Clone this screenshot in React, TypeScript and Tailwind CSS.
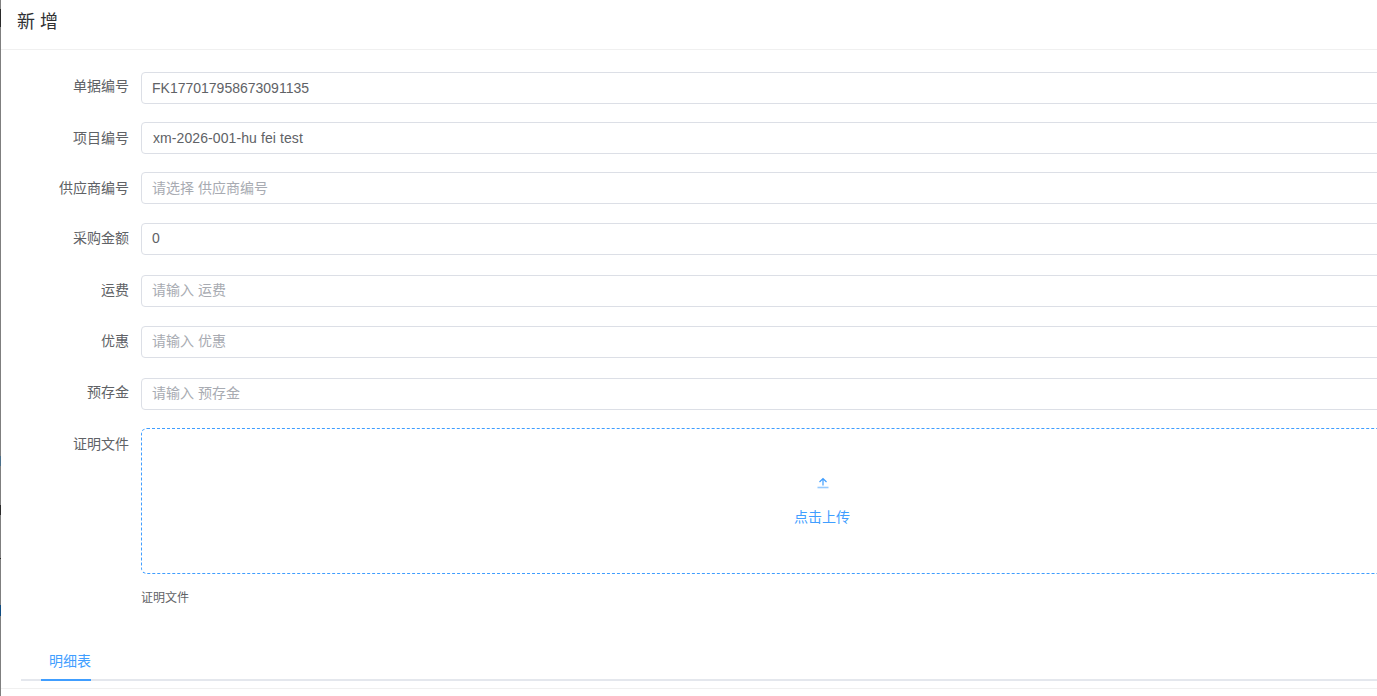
const font = "font-['Liberation_Sans','Noto_Sans_CJK_SC',sans-serif]";

function Field({ label, value, placeholder, className, labelLeading, boxPad, valueClass }: { label: string; value?: string; placeholder?: string; className: string; labelLeading: string; boxPad?: string; valueClass?: string }) {
  return (
    <div className={`flex ${className}`}>
      <label className={`w-[128px] shrink-0 text-right text-[14px] text-[#606266] ${labelLeading}`}>{label}</label>
      <div className={`ml-3 flex h-8 w-[1300px] shrink-0 items-center rounded border border-[#dcdfe6] bg-white px-[10px] text-[14px] ${boxPad ?? ""}`}>
        {value ? <span className={`text-[#606266] ${valueClass ?? ""}`}>{value}</span> : <span className="text-[#a8abb2]">{placeholder}</span>}
      </div>
    </div>
  );
}

export default function App() {
  return (
    <div className={`${font} relative flex h-[696px] w-[1377px] overflow-hidden bg-[#7f7f7f]`}>
      {/* page behind the dialog, shows through at the left edge */}
      <div className="absolute left-0 top-[9px] h-[18px] w-px bg-[#2a2a2a]" />
      <div className="absolute left-0 top-[456px] h-[10px] w-px bg-[#4a6f8a]" />
      <div className="absolute left-0 top-[505px] h-[10px] w-px bg-[#2a2a2a]" />
      <div className="absolute left-0 top-[558px] h-px w-px bg-[#2a2a2a]" />
      <div className="absolute left-0 top-[605px] h-[11px] w-px bg-[#0f4c81]" />
      <div className="ml-px min-w-0 flex-1 overflow-hidden bg-white">
        <div className="h-[50px] border-b border-[#f0f0f0] pl-4 text-[18px] leading-[44px] text-[#303133]">新 增</div>
        <div className="pt-[22px]">
          <Field label="单据编号" value="FK177017958673091135" className="mb-[18px]" labelLeading="leading-[28px]" />
          <Field label="项目编号" value="xm-2026-001-hu fei test" className="mb-[18px]" labelLeading="leading-[32px]" valueClass="ml-px tracking-[0.09px]" />
          <Field label="供应商编号" placeholder="请选择 供应商编号" className="mb-[19px]" labelLeading="leading-[32px]" />
          <Field label="采购金额" value="0" className="mb-5" labelLeading="leading-[30px]" boxPad="pb-px" />
          <Field label="运费" placeholder="请输入 运费" className="mb-[19px]" labelLeading="leading-[30px]" boxPad="pb-px" />
          <Field label="优惠" placeholder="请输入 优惠" className="mb-5" labelLeading="leading-[30px]" boxPad="pb-px" />
          <Field label="预存金" placeholder="请输入 预存金" className="mb-[18px]" labelLeading="leading-[28px]" boxPad="pb-px" />
          <div className="flex">
            <label className="w-[128px] shrink-0 text-right text-[14px] leading-[32px] text-[#606266]">证明文件</label>
            <div className="ml-3 w-[1364px] shrink-0">
              <div className="flex h-[146px] w-[1364px] flex-col items-center rounded-md border border-dashed border-[#409eff] pt-[46px] text-[#409eff]">
                <svg width="14" height="14" viewBox="0 0 14 14" fill="none" stroke="currentColor" strokeWidth="1.2">
                  <path d="M7 10.5V3.5M3.5 7 7 3.5 10.5 7" />
                  <path d="M1.5 12.5h11" strokeWidth="1.6" opacity="0.55" />
                </svg>
                <span className="mt-[17px] -translate-x-[1px] text-[14px] leading-[22px]">点击上传</span>
              </div>
              <p className="mt-4 text-[12px] leading-4 text-[#606266]">证明文件</p>
            </div>
          </div>
        </div>
        <div className="mt-[33px] ml-5 h-[42px] border-b-2 border-[#e4e7ed]">
          <div className="ml-5 h-[42px] w-[50px] border-b-2 border-[#409eff] pl-2 text-[14px] leading-[45px] text-[#409eff]">明细表</div>
        </div>
        <div className="mt-[7px] border-t border-[#f0f0f0]" />
      </div>
    </div>
  );
}
